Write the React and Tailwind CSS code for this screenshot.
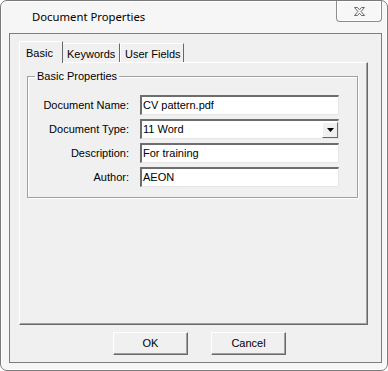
import React from "react";

const fields = [
  { label: "Document Name:", value: "CV pattern.pdf" },
  { label: "Document Type:", value: "11 Word", select: true },
  { label: "Description:", value: "For training" },
  { label: "Author:", value: "AEON" },
];

const tabs = ["Basic", "Keywords", "User Fields"];

function CloseIcon() {
  return (
    <svg width="13" height="11" viewBox="0 0 13 11">
      <path
        d="M1.5 1.5h3l2 2.2 2-2.2h3l-3.4 4 3.4 4h-3l-2-2.2-2 2.2h-3l3.4-4z"
        fill="#f4f4f4"
        stroke="#6a6a6a"
        strokeWidth="1"
        strokeLinejoin="round"
      />
    </svg>
  );
}

function Field({ label, value, select }) {
  return (
    <div className="flex items-center">
      <div className="w-[102px] text-right pr-[1px] text-[11px] text-black whitespace-nowrap">
        {label}
      </div>
      <div className="ml-[10px] w-[199px] h-[20px] flex items-center bg-white border-t-2 border-l-2 border-r border-b border-t-[#6d6d6d] border-l-[#6d6d6d] border-r-[#e6e6e6] border-b-[#e6e6e6]">
        <span className="flex-1 pl-[1px] text-[11px] text-black leading-none">
          {value}
        </span>
        {select && (
          <div className="w-[16px] h-[16px] flex items-center justify-center bg-[#f0f0f0] border border-t-white border-l-white border-r-[#696969] border-b-[#696969]">
            <svg width="7" height="4" viewBox="0 0 7 4">
              <path d="M0 0h7L3.5 4z" fill="#000" />
            </svg>
          </div>
        )}
      </div>
    </div>
  );
}

export default function App() {
  return (
    <div
      className="w-[388px] h-[371px] bg-white"
      style={{ fontFamily: "'Liberation Sans', Arial, sans-serif" }}
    >
      <div className="w-[388px] h-[371px] flex flex-col bg-[#f6f6f6] border border-[#7a7a7a] rounded-[7px] shadow-[inset_1px_1px_0_#ffffff,inset_-1px_-1px_0_#ffffff]">
        {/* title bar */}
        <div className="h-[32px] flex items-start shrink-0">
          <div
            className="mt-[8px] ml-[31px] text-[11.3px] text-black"
            style={{ fontFamily: "'Noto Sans', 'Open Sans', sans-serif" }}
          >
            Document Properties
          </div>
          <div className="ml-auto mr-[5px] w-[46px] h-[21px] flex items-center justify-center rounded-b-[4px] border border-t-0 border-[#8c8c8c] bg-[#f7f7f7] shadow-[inset_0_0_0_1px_#ffffff]">
            <CloseIcon />
          </div>
        </div>

        {/* client area */}
        <div className="ml-[8px] mr-[5px] mb-[7px] flex-1 flex flex-col bg-[#f0f0f0] border border-[#7d7d7d] pl-[9px] pr-[13px] pt-[6px]">
          {/* tabs */}
          <div className="flex items-end h-[22px]">
            {tabs.map((t, i) =>
              i === 0 ? (
                <div
                  key={t}
                  className="h-[22px] w-[44px] pl-[6px] pt-[3px] text-[11px] whitespace-nowrap bg-[#f0f0f0] border-t border-l border-r border-t-white border-l-white border-r-[#696969] relative z-10 -mb-[1px]"
                >
                  {t}
                </div>
              ) : (
                <div
                  key={t}
                  className={`h-[19px] px-[4px] pt-[2px] text-[11px] whitespace-nowrap bg-[#f0f0f0] border-t border-r border-t-white border-r-[#696969] ${
                    i === 1 ? "w-[57px]" : "w-[64px] border-l border-l-white"
                  }`}
                >
                  {t}
                </div>
              )
            )}
          </div>

          {/* panel */}
          <div className="h-[263px] bg-[#f0f0f0] border border-t-white border-l-white border-r-[#696969] border-b-[#696969] shadow-[inset_-1px_-1px_0_#a0a0a0] pl-[7px] pt-[6px]">
            <fieldset className="w-[331px] h-[129px] border border-[#a0a0a0] shadow-[inset_1px_1px_0_#ffffff,1px_1px_0_#ffffff] pb-[10px]">
              <legend className="ml-[7px] px-[2px] text-[11px] leading-[14px] text-black">
                Basic Properties
              </legend>
              <div className="flex flex-col gap-[4px] mt-[12px]">
                {fields.map((f) => (
                  <Field key={f.label} {...f} />
                ))}
              </div>
            </fieldset>
          </div>

          {/* buttons */}
          <div className="flex gap-[23px] ml-[94px] mt-[7px]">
            {["OK", "Cancel"].map((b) => (
              <div
                key={b}
                className="w-[75px] h-[23px] flex items-center justify-center text-[11px] bg-[#f0f0f0] border border-t-white border-l-white border-r-[#696969] border-b-[#696969] shadow-[inset_-1px_-1px_0_#a0a0a0]"
              >
                {b}
              </div>
            ))}
          </div>
        </div>
      </div>
    </div>
  );
}
